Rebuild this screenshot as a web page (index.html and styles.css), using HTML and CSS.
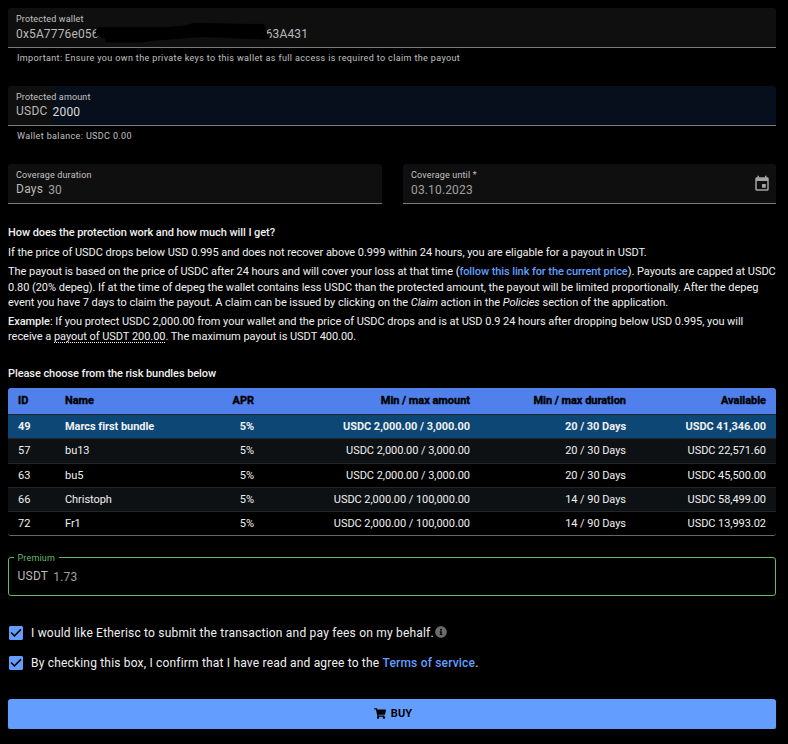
FILE: index.html
```html
<!DOCTYPE html>
<html lang="en">
<head>
<meta charset="utf-8">
<title>Depeg protection</title>
<link rel="stylesheet" href="styles.css">
</head>
<body>
<form class="form">
  <div class="field wallet">
    <div class="label">Protected wallet</div>
    <div class="input"><span>0x5A7776e056</span><span class="hidden-part"></span><span>63A431</span></div>
    <svg class="scribble" width="180" height="24" viewBox="0 0 180 24"><path d="M6.500 5L78 5 93 3.500 101 1 173 2 174 8.500 176 13 178.500 17 172 17.500 113 15 98 16 58 19 50 20.500 14 20.500 13 16 9 15.500 8 13 3.500 15.500 4 8Z" fill="#000"/></svg>
  </div>
  <div class="helper">Important: Ensure you own the private keys to this wallet as full access is required to claim the payout</div>

  <div class="field amount">
    <div class="label">Protected amount</div>
    <div class="input"><span class="prefix">USDC</span><span class="value">2000</span></div>
  </div>
  <div class="helper">Wallet balance: USDC 0.00</div>

  <div class="pair">
    <div class="field">
      <div class="label">Coverage duration</div>
      <div class="input dim"><span class="prefix">Days</span><span class="value">30</span></div>
    </div>
    <div class="field date">
      <div>
        <div class="label">Coverage until *</div>
        <div class="input dim"><span class="value">03.10.2023</span></div>
      </div>
      <svg class="calendar" viewBox="0 0 24 24"><path d="M17 12h-5v5h5v-5zM16 1v2H8V1H6v2H5c-1.11 0-1.99.9-1.99 2L3 19c0 1.1.89 2 2 2h14c1.1 0 2-.9 2-2V5c0-1.1-.9-2-2-2h-1V1h-2zm3 18H5V8h14v11z"/></svg>
    </div>
  </div>

  <section class="explain">
    <h2>How does the protection work and how much will I get?</h2>
    <p>If the price of USDC drops below USD 0.995 and does not recover above 0.999 within 24 hours, you are eligable for a payout in USDT.</p>
    <p>The payout is based on the price of USDC after 24 hours and will cover your loss at that time (<a>follow this link for the current price</a>). Payouts are capped at USDC<br>0.80 (20% depeg). If at the time of depeg the wallet contains less USDC than the protected amount, the payout will be limited proportionally. After the depeg<br>event you have 7 days to claim the payout. A claim can be issued by clicking on the <i>Claim</i> action in the <i>Policies</i> section of the application.</p>
    <p class="example"><b>Example</b>: If you protect USDC 2,000.00 from your wallet and the price of USDC drops and is at USD 0.9 24 hours after dropping below USD 0.995, you will<br>receive a <span class="dotted">payout of USDT 200.00</span>. The maximum payout is USDT 400.00.</p>
  </section>

  <h2 class="choose">Please choose from the risk bundles below</h2>
  <table class="bundles">
    <colgroup><col class="c1"><col class="c2"><col class="c3"><col class="c4"><col class="c5"><col class="c6"></colgroup>
    <thead><tr><th>ID</th><th>Name</th><th class="r">APR</th><th class="r">Min / max amount</th><th class="r">Min / max duration</th><th class="r">Available</th></tr></thead>
    <tbody>
      <tr class="selected"><td>49</td><td>Marcs first bundle</td><td class="r">5%</td><td class="r">USDC 2,000.00 / 3,000.00</td><td class="r">20 / 30 Days</td><td class="r">USDC 41,346.00</td></tr>
      <tr class="tall"><td>57</td><td>bu13</td><td class="r">5%</td><td class="r">USDC 2,000.00 / 3,000.00</td><td class="r">20 / 30 Days</td><td class="r">USDC 22,571.60</td></tr>
      <tr><td>63</td><td>bu5</td><td class="r">5%</td><td class="r">USDC 2,000.00 / 3,000.00</td><td class="r">20 / 30 Days</td><td class="r">USDC 45,500.00</td></tr>
      <tr><td>66</td><td>Christoph</td><td class="r">5%</td><td class="r">USDC 2,000.00 / 100,000.00</td><td class="r">14 / 90 Days</td><td class="r">USDC 58,499.00</td></tr>
      <tr><td>72</td><td>Fr1</td><td class="r">5%</td><td class="r">USDC 2,000.00 / 100,000.00</td><td class="r">14 / 90 Days</td><td class="r">USDC 13,993.02</td></tr>
    </tbody>
  </table>

  <fieldset class="premium">
    <legend>Premium</legend>
    <div class="input dim"><span class="prefix">USDT</span><span class="value">1.73</span></div>
  </fieldset>

  <div class="check">
    <svg class="box" viewBox="3 3 18 18"><path d="M19 3H5c-1.11 0-2 .9-2 2v14c0 1.1.89 2 2 2h14c1.11 0 2-.9 2-2V5c0-1.1-.89-2-2-2zm-9 14l-5-5 1.41-1.41L10 14.17l7.59-7.59L19 8l-9 9z"/></svg>
    <span>I would like Etherisc to submit the transaction and pay fees on my behalf.</span>
    <svg class="info" viewBox="0 0 512 512"><path d="M256 8C119 8 8 119 8 256s111 248 248 248 248-111 248-248S393 8 256 8zm0 110a42 42 0 1 1 0 84 42 42 0 0 1 0-84zm56 254c0 7-5 12-12 12h-88c-7 0-12-5-12-12v-24c0-7 5-12 12-12h12v-64h-12c-7 0-12-5-12-12v-24c0-7 5-12 12-12h64c7 0 12 5 12 12v100h12c7 0 12 5 12 12v24z"/></svg>
  </div>
  <div class="check second">
    <svg class="box" viewBox="3 3 18 18"><path d="M19 3H5c-1.11 0-2 .9-2 2v14c0 1.1.89 2 2 2h14c1.11 0 2-.9 2-2V5c0-1.1-.89-2-2-2zm-9 14l-5-5 1.41-1.41L10 14.17l7.59-7.59L19 8l-9 9z"/></svg>
    <span>By checking this box, I confirm that I have read and agree to the <a>Terms of service</a>.</span>
  </div>

  <button class="buy" type="button">
    <svg viewBox="0 0 576 512"><path d="M528.12 301.319l47.273-208C578.806 78.301 567.391 64 551.99 64H159.208l-9.166-44.81C147.758 8.021 137.93 0 126.529 0H24C10.745 0 0 10.745 0 24v16c0 13.255 10.745 24 24 24h69.883l70.248 343.435C147.325 417.1 136 435.222 136 456c0 30.928 25.072 56 56 56s56-25.072 56-56c0-15.674-6.447-29.835-16.824-40h209.647C430.447 426.165 424 440.326 424 456c0 30.928 25.072 56 56 56s56-25.072 56-56c0-22.172-12.888-41.332-31.579-50.405l5.517-24.276c3.413-15.018-8.002-29.319-23.403-29.319H218.117l-6.545-32h293.145c11.206 0 20.92-7.754 23.403-18.681z"/></svg>
    <span>BUY</span>
  </button>
</form>
</body>
</html>
```
FILE: styles.css
```css
* { box-sizing: border-box; }
body { margin: 0; background: #000; color: #f0f0f0; font-family: Roboto, sans-serif; font-size: 11px; }
.form { padding: 8px 12px 0 8px; }
a { color: #639eff; font-weight: 500; }
.field { position: relative; height: 40px; padding: 6px 8px 0; background: #0f0f0f; border-bottom: 1px solid #7b7b7b; border-radius: 3px 3px 0 0; }
.label { font-size: 9px; line-height: 10px; letter-spacing: .16px; color: #c4c4c4; white-space: nowrap; }
.input { display: flex; height: 20px; align-items: center; font-size: 12px; line-height: 18px; letter-spacing: .15px; color: #b9b9b9; }
.hidden-part { width: 167px; }
.scribble { position: absolute; left: 84px; top: 14px; }
.helper { padding: 3px 0 0 9px; font-size: 9px; line-height: 14px; height: 38px; letter-spacing: .37px; color: #c0c0c0; white-space: nowrap; }
.prefix { margin: -2px 5px 0 0; letter-spacing: .25px; color: #b9b9b9; }
.dim .value { color: #a0a0a0; }
.amount { background: linear-gradient(to right, #0f0f0f 45px, #080f1c 45px); }
.amount .value { color: #dcdcdc; }
.pair { display: grid; grid-template-columns: 374px 373px; justify-content: space-between; }
.date { display: flex; justify-content: space-between; }
.calendar { width: 18px; height: 18px; margin: 5px -3px 0 0; fill: #a3a3a3; }
h2 { margin: 0; font-size: 11px; font-weight: 500; line-height: 16px; letter-spacing: -.07px; }
.explain { height: 123px; margin-top: 21px; white-space: nowrap; }
p { margin: 4px 0 0; line-height: 15.4px; letter-spacing: -.036px; }
p.example { margin-top: 3px; line-height: 15px; }
b { font-weight: 500; }
p a { letter-spacing: -.09px; }
.dotted { border-bottom: 1px dotted #fff; display: inline-block; line-height: 11px; }
.choose { margin-top: 18px; }
.bundles { width: 768px; table-layout: fixed; border-collapse: separate; border-spacing: 0; margin-top: 6px; border-radius: 3px; overflow: hidden; border-bottom: 1px solid #666; letter-spacing: -.05px; }
.c1 { width: 47px; } .c2 { width: 119px; } .c3 { width: 90px; } .c4 { width: 216px; } .c5 { width: 156px; } .c6 { width: 140px; }
th, td { padding: 0 10px; height: 24px; border-bottom: 1px solid #232527; text-align: left; white-space: nowrap; line-height: 14px; }
th { height: 27px; background: #5080ec; color: #000; font-weight: 700; letter-spacing: -.03px; -webkit-text-stroke: .4px #000; }
th.r, td.r { text-align: right; }
.tall td { height: 25px; }
tbody tr:nth-child(even) { background: #0d1114; }
.selected { background: #0d4775; font-weight: 700; }
tbody tr:last-child td { border: 0; height: 23px; }
.premium { height: 44px; margin: 16px 0 0; padding: 4px 8px 0 8.500px; border: 1px solid #66bb6a; border-radius: 3px; min-width: 0; }
legend { padding: 1px 4px 0; margin-left: -4px; font-size: 9px; line-height: 10px; letter-spacing: .16px; color: #66bb6a; }
.check { display: flex; align-items: center; height: 30px; margin-top: 22px; padding-left: 1px; font-size: 12px; letter-spacing: .2px; }
.check.second { margin-top: 0; letter-spacing: .185px; }
.box { width: 14px; height: 14px; margin-right: 8px; fill: #639eff; }
.info { width: 12px; height: 12px; margin: -2px 0 0 1px; fill: #6b6b6b; }
.buy { display: flex; width: 768px; height: 30px; margin-top: 21px; padding: 0 0 1px 2px; align-items: center; justify-content: center; gap: 5px; border: 0; border-radius: 3px; background: #639eff; color: #000; font: 700 11px Roboto, sans-serif; letter-spacing: .1px; box-shadow: 0 1px 1px #666; }
.buy svg { width: 12px; height: 11px; }
```
